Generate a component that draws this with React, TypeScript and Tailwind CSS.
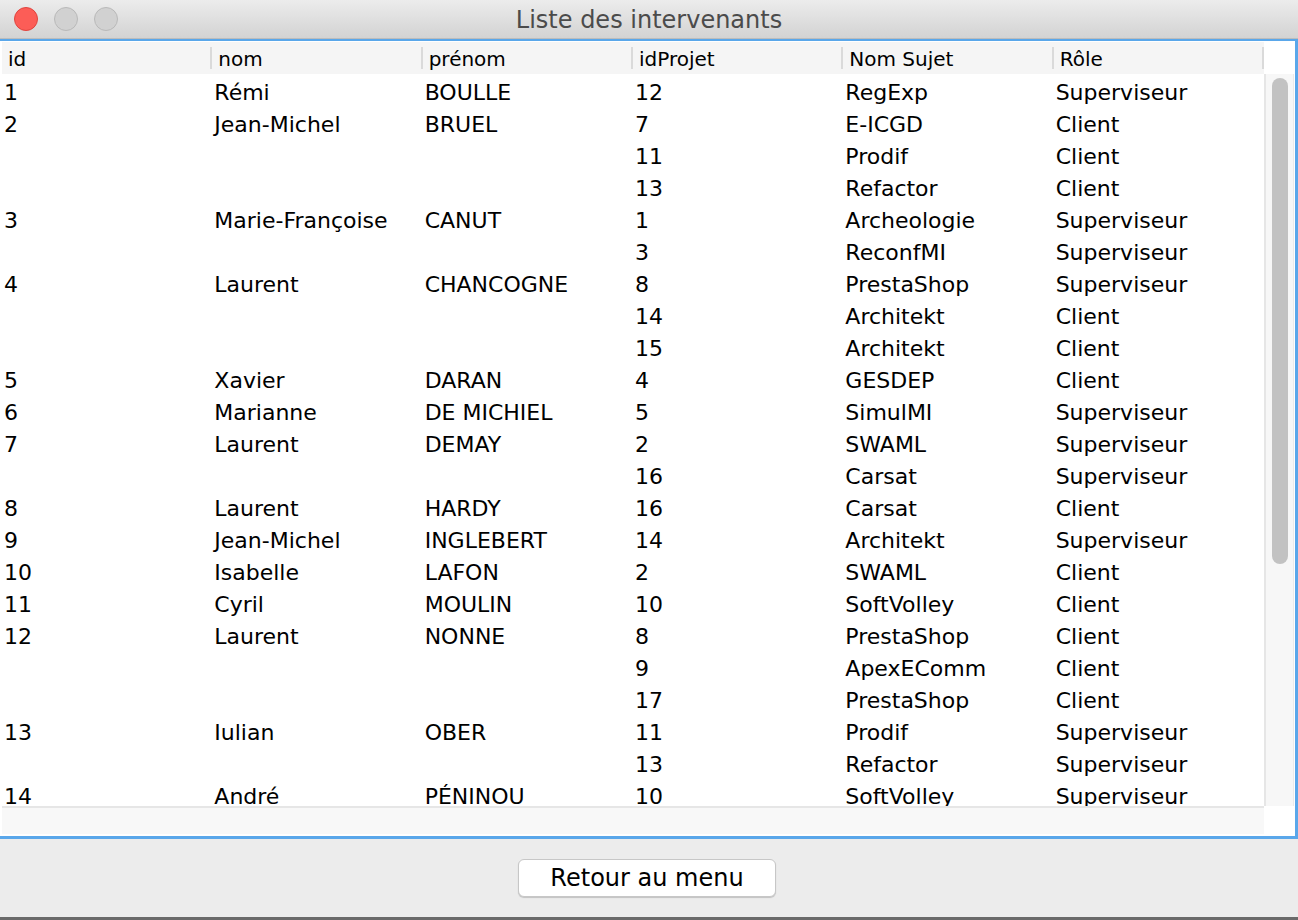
import React from "react";

type Row = [string, string, string, string, string, string];

const rows: Row[] = [
  ["1", "Rémi", "BOULLE", "12", "RegExp", "Superviseur"],
  ["2", "Jean-Michel", "BRUEL", "7", "E-ICGD", "Client"],
  ["", "", "", "11", "Prodif", "Client"],
  ["", "", "", "13", "Refactor", "Client"],
  ["3", "Marie-Françoise", "CANUT", "1", "Archeologie", "Superviseur"],
  ["", "", "", "3", "ReconfMI", "Superviseur"],
  ["4", "Laurent", "CHANCOGNE", "8", "PrestaShop", "Superviseur"],
  ["", "", "", "14", "Architekt", "Client"],
  ["", "", "", "15", "Architekt", "Client"],
  ["5", "Xavier", "DARAN", "4", "GESDEP", "Client"],
  ["6", "Marianne", "DE MICHIEL", "5", "SimulMI", "Superviseur"],
  ["7", "Laurent", "DEMAY", "2", "SWAML", "Superviseur"],
  ["", "", "", "16", "Carsat", "Superviseur"],
  ["8", "Laurent", "HARDY", "16", "Carsat", "Client"],
  ["9", "Jean-Michel", "INGLEBERT", "14", "Architekt", "Superviseur"],
  ["10", "Isabelle", "LAFON", "2", "SWAML", "Client"],
  ["11", "Cyril", "MOULIN", "10", "SoftVolley", "Client"],
  ["12", "Laurent", "NONNE", "8", "PrestaShop", "Client"],
  ["", "", "", "9", "ApexEComm", "Client"],
  ["", "", "", "17", "PrestaShop", "Client"],
  ["13", "Iulian", "OBER", "11", "Prodif", "Superviseur"],
  ["", "", "", "13", "Refactor", "Superviseur"],
  ["14", "André", "PÉNINOU", "10", "SoftVolley", "Superviseur"],
];

const headers = ["id", "nom", "prénom", "idProjet", "Nom Sujet", "Rôle"];

export default function App() {
  return (
    <div
      className="w-[1298px] h-[920px] flex flex-col bg-[#ececec] overflow-hidden text-black"
      style={{ fontFamily: '"DejaVu Sans", "Liberation Sans", sans-serif' }}
    >
      {/* Title bar */}
      <div className="h-[39px] shrink-0 flex items-center relative bg-gradient-to-b from-[#ececec] to-[#d3d3d3] border-b border-[#bcbcbc]">
        <div className="flex items-center gap-[16px] pl-[14px]">
          <div className="w-[24px] h-[24px] rounded-full bg-[#fc5d57] border border-[#e0443e]" />
          <div className="w-[24px] h-[24px] rounded-full bg-[#d1d1d1] border border-[#b9b9b9]" />
          <div className="w-[24px] h-[24px] rounded-full bg-[#d1d1d1] border border-[#b9b9b9]" />
        </div>
        <div className="absolute inset-0 flex items-center justify-center pt-[1px] text-[24px] text-[#4b4b4b] pointer-events-none">
          Liste des intervenants
        </div>
      </div>

      {/* Table panel */}
      <div className="h-[800px] shrink-0 flex flex-col bg-white border-t-2 border-r-[3px] border-b-[3px] border-[#5aa7ea] pt-[1px] pl-[2px] pr-[1px] pb-[2px]">
        <div className="flex">
          <div className="w-[1262px] flex flex-col">
            {/* header */}
            <div className="h-[32px] grid grid-cols-6 bg-[#f5f5f5] text-[20px]">
              {headers.map((h) => (
                <div key={h} className="flex items-center">
                  <div className="flex-1 pl-[6px] pt-[2px] whitespace-nowrap">{h}</div>
                  <div className="w-[2px] h-[22px] bg-[#dadada]" />
                </div>
              ))}
            </div>
            {/* body */}
            <div className="h-[732px] overflow-hidden text-[22px]">
              {rows.map((r, i) => (
                <div key={i} className="h-[32px] grid grid-cols-6 items-start">
                  {r.map((c, j) => (
                    <div key={j} className="pl-[2px] whitespace-nowrap leading-[38px] h-[32px]">
                      {c}
                    </div>
                  ))}
                </div>
              ))}
            </div>
            {/* bottom strip */}
            <div className="h-[28px] border-t-2 border-[#e6e6e6] bg-[#f8f8f8]" />
          </div>
          {/* vertical scrollbar */}
          <div className="w-[30px] flex flex-col">
            <div className="h-[32px] bg-white" />
            <div className="h-[732px] bg-[#f7f7f7] border-l-2 border-[#e6e6e6] border-r border-r-[#ebebeb] pl-[6px] pt-[4px]">
              <div className="w-[16px] h-[486px] rounded-full bg-[#c2c2c2]" />
            </div>
            <div className="h-[28px] bg-white" />
          </div>
        </div>
      </div>

      {/* bottom area */}
      <div className="flex-1 flex items-center justify-center">
        <button className="w-[258px] h-[38px] -translate-x-[2px] bg-white rounded-[6px] border border-[#c7c7c7] shadow-[0_1px_1px_rgba(0,0,0,0.18)] text-[24px] flex items-center justify-center">
          Retour au menu
        </button>
      </div>
      <div className="h-[3px] shrink-0 bg-[#6a6a6a]" />
    </div>
  );
}
